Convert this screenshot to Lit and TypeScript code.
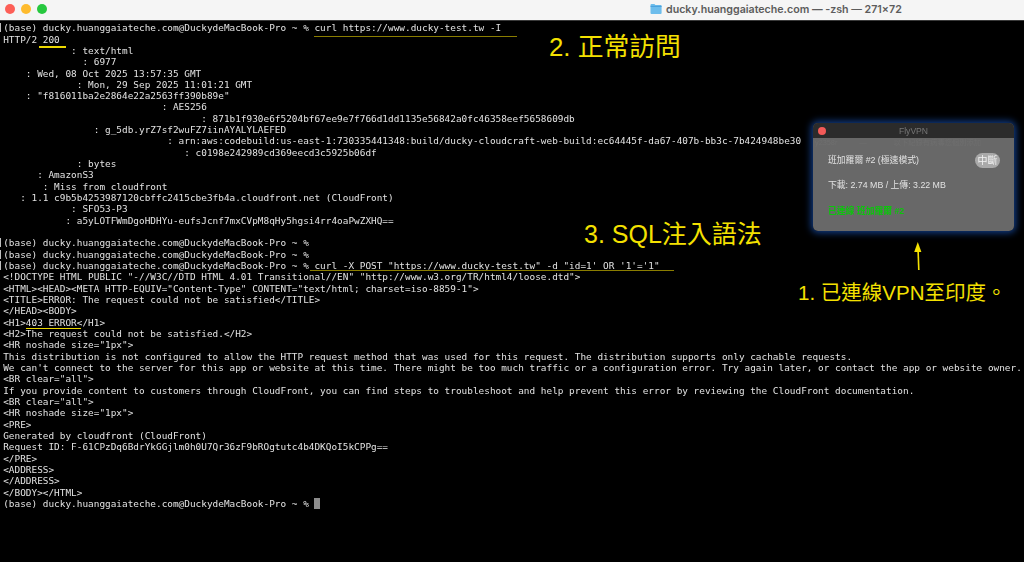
import { LitElement, html, css } from "lit";
import { customElement } from "lit/decorators.js";

const P = "(base) ducky.huanggaiateche.com@DuckydeMacBook-Pro ~ %";
const LINES: string[] = [
  `${P} curl https://www.ducky-test.tw -I`,
  `HTTP/2 200`,
  `            : text/html`,
  `              : 6977`,
  `    : Wed, 08 Oct 2025 13:57:35 GMT`,
  `             : Mon, 29 Sep 2025 11:01:21 GMT`,
  `    : "f816011ba2e2864e22a2563ff390b89e"`,
  `                            : AES256`,
  `                                   : 871b1f930e6f5204bf67ee9e7f766d1dd1135e56842a0fc46358eef5658609db`,
  `                : g_5db.yrZ7sf2wuFZ7iinAYALYLAEFED`,
  `                             : arn:aws:codebuild:us-east-1:730335441348:build/ducky-cloudcraft-web-build:ec64445f-da67-407b-bb3c-7b424948be30`,
  `                                : c0198e242989cd369eecd3c5925b06df`,
  `             : bytes`,
  `      : AmazonS3`,
  `       : Miss from cloudfront`,
  `   : 1.1 c9b5b4253987120cbffc2415cbe3fb4a.cloudfront.net (CloudFront)`,
  `            : SFO53-P3`,
  `           : a5yLOTFWmDgoHDHYu-eufsJcnf7mxCVpM8qHy5hgsi4rr4oaPwZXHQ==`,
  ``,
  P,
  P,
  `${P} curl -X POST "https://www.ducky-test.tw" -d "id=1' OR '1'='1"`,
  `<!DOCTYPE HTML PUBLIC "-//W3C//DTD HTML 4.01 Transitional//EN" "http://www.w3.org/TR/html4/loose.dtd">`,
  `<HTML><HEAD><META HTTP-EQUIV="Content-Type" CONTENT="text/html; charset=iso-8859-1">`,
  `<TITLE>ERROR: The request could not be satisfied</TITLE>`,
  `</HEAD><BODY>`,
  `<H1>403 ERROR</H1>`,
  `<H2>The request could not be satisfied.</H2>`,
  `<HR noshade size="1px">`,
  `This distribution is not configured to allow the HTTP request method that was used for this request. The distribution supports only cachable requests.`,
  `We can't connect to the server for this app or website at this time. There might be too much traffic or a configuration error. Try again later, or contact the app or website owner.`,
  `<BR clear="all">`,
  `If you provide content to customers through CloudFront, you can find steps to troubleshoot and help prevent this error by reviewing the CloudFront documentation.`,
  `<BR clear="all">`,
  `<HR noshade size="1px">`,
  `<PRE>`,
  `Generated by cloudfront (CloudFront)`,
  `Request ID: F-61CPzDq6BdrYkGGjlm0h0U7Qr36zF9bROgtutc4b4DKQoI5kCPPg==`,
  `</PRE>`,
  `<ADDRESS>`,
  `</ADDRESS>`,
  `</BODY></HTML>`,
];
const MARKED = new Set([0, 19, 20, 21]);

@customElement("app-root")
export class AppRoot extends LitElement {
  static styles = css`
    :host {
      display: flex;
      flex-direction: column;
      position: relative;
      width: 1024px;
      height: 562px;
      overflow: hidden;
      background: #000;
    }
    .titlebar {
      flex: none;
      box-sizing: border-box;
      height: 21px;
      display: flex;
      align-items: center;
      background: #f5f5f5;
      border-bottom: 1px solid #3a3a3a;
      padding: 0 0 2px 5px;
    }
    .lights { display: flex; gap: 6px; width: 645px; }
    .light { width: 10px; height: 10px; border-radius: 50%; }
    .red { background: #fd5f57; }
    .yellow { background: #febb2e; }
    .green { background: #27c83f; }
    .wintitle {
      display: flex;
      align-items: center;
      gap: 4px;
      font: 600 10.65px "Inter", "Liberation Sans", sans-serif;
      color: #5c5c5c;
      white-space: nowrap;
    }
    .wintitle svg { display: block; }
    .term {
      flex: 1;
      padding: 1.2px 0 0 3.2px;
      font-family: "DejaVu Sans Mono", monospace;
      font-size: 9.4px;
      letter-spacing: 0.015px;
      line-height: 11.34px;
      color: #e2e2e2;
      filter: blur(0.3px);
    }
    .line { height: 11.34px; white-space: pre; position: relative; }
    .line.mark::before {
      content: "";
      position: absolute;
      left: -3.2px;
      top: 1px;
      width: 1px;
      height: 9px;
      border-left: 1px solid #bdbdbd;
    }
    .cursor {
      display: inline-block;
      width: 5.5px;
      height: 11px;
      margin-left: 5.6px;
      background: #8c8c8c;
      vertical-align: top;
    }
    .ul { position: absolute; height: 1px; }
    .ul-dim { background: #8a7d00; }
    .ul-bright { background: #ecd800; height: 1.5px; }
    .ul1 { left: 314px; top: 36px; width: 203px; }
    .ul2 { left: 39px; top: 46px; width: 27px; }
    .ul3 { left: 310px; top: 270px; width: 364px; }
    .ul4 { left: 26px; top: 327.5px; width: 55px; }
    .note {
      position: absolute;
      color: #f4e100;
      font-family: "Liberation Sans", "Noto Sans CJK TC", sans-serif;
      white-space: nowrap;
      line-height: 1;
    }
    .n2 { left: 549px; top: 35px; font-size: 25.8px; }
    .n3 { left: 584px; top: 221.5px; font-size: 25px; }
    .n1 { left: 798px; top: 283px; font-size: 20.5px; }
    .arrow { position: absolute; left: 908px; top: 240px; }
    .vpn {
      position: absolute;
      left: 813px;
      top: 123px;
      width: 201px;
      height: 108px;
      display: flex;
      flex-direction: column;
      border-radius: 5px;
      overflow: hidden;
      background: #686868;
      font-family: "Liberation Sans", "Noto Sans CJK TC", sans-serif;
      filter: blur(0.35px);
    }
    .glow {
      position: absolute;
      left: 813px;
      top: 123px;
      width: 201px;
      height: 108px;
      border-radius: 5px;
      box-shadow: 0 0 7px 2px #123d86;
    }
    .vtitle {
      flex: none;
      height: 15px;
      background: #2b2b2b;
      display: flex;
      align-items: center;
      justify-content: center;
      position: relative;
      color: #767676;
      font: 8.6px "Liberation Sans", sans-serif;
    }
    .vdot {
      position: absolute;
      left: 4.5px;
      top: 3.5px;
      width: 8px;
      height: 8px;
      border-radius: 50%;
      background: #f25a58;
    }
    .vghost {
      display: flex;
      gap: 22px;
      height: 9px;
      padding-left: 2px;
      font-size: 7.3px;
      line-height: 9px;
      color: #6f6f6f;
      white-space: nowrap;
    }
    .vghost span:last-child { margin-left: 5px; }
    .vbody {
      flex: 1;
      display: flex;
      flex-direction: column;
      gap: 12.3px;
      padding: 7px 14px 0 15px;
      font-size: 8.8px;
      line-height: 13px;
      color: #e2e2e2;
    }
    .vrow { display: flex; justify-content: space-between; align-items: center; height: 13px; }
    .pill {
      width: 25px;
      height: 15px;
      border-radius: 8px;
      background: #a9a9a9;
      color: #f2f2f2;
      font-size: 10px;
      line-height: 15px;
      text-align: center;
    }
    .ok { color: #0cc50c; font-weight: 700; }
  `;

  render() {
    return html`
      <div class="titlebar">
        <div class="lights">
          <div class="light red"></div>
          <div class="light yellow"></div>
          <div class="light green"></div>
        </div>
        <div class="wintitle">
          <svg width="12" height="12" viewBox="0 0 12 12">
            <path d="M0.5 2.2 Q0.5 1 1.6 1 H4.4 L5.4 2.1 H10.6 Q11.6 2.1 11.6 3.1 V10 Q11.6 11 10.6 11 H1.5 Q0.5 11 0.5 10 Z" fill="#6dbdec"/>
            <path d="M0.5 3.4 H11.6" stroke="#3f97d6" stroke-width="0.8"/>
          </svg>
          <span>ducky.huanggaiateche.com — -zsh — 271×72</span>
        </div>
      </div>
      <div class="term">
        ${LINES.map(
          (l, i) => html`<div class="line ${MARKED.has(i) ? "mark" : ""}">${l}</div>`
        )}
        <div class="line">${P}<span class="cursor"></span></div>
      </div>
      <div class="ul ul-dim ul1"></div>
      <div class="ul ul-bright ul2"></div>
      <div class="ul ul-dim ul3"></div>
      <div class="ul ul-bright ul4"></div>
      <div class="note n2">2. 正常訪問</div>
      <div class="note n3">3. SQL注入語法</div>
      <div class="note n1">1. 已連線VPN至印度。</div>
      <svg class="arrow" width="20" height="32" viewBox="0 0 20 32">
        <path d="M10.8 30 L10 8" stroke="#f4e100" stroke-width="1.6" fill="none"/>
        <path d="M9.8 2 L13.4 12 L6.2 12 Z" fill="#f4e100"/>
      </svg>
      <div class="glow"></div>
      <div class="vpn">
        <div class="vtitle"><div class="vdot"></div>FlyVPN</div>
        <div class="vghost"><span>y2358r</span><span>—</span><span>以下紀錄有病毒您個別添加</span></div>
        <div class="vbody">
          <div class="vrow"><span>班加羅爾 #2 (極速模式)</span><span class="pill">中斷</span></div>
          <div class="vrow"><span>下載: 2.74 MB / 上傳: 3.22 MB</span></div>
          <div class="vrow"><span class="ok">已連線 班加羅爾 #2</span></div>
        </div>
      </div>
    `;
  }
}
